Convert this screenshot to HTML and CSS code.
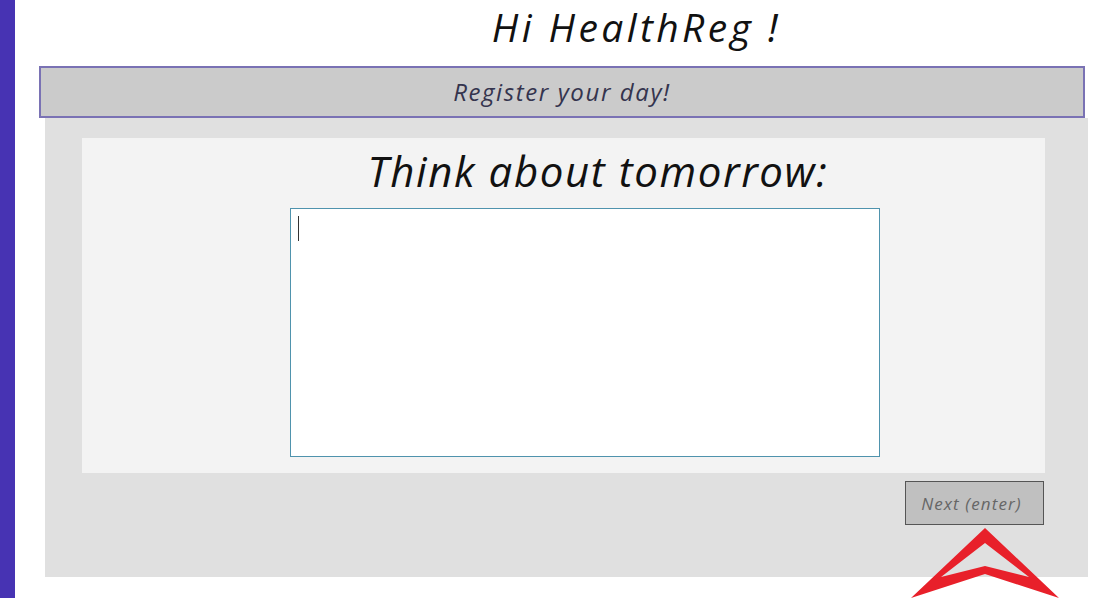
FILE: index.html
```html
<!DOCTYPE html>
<html>
<head>
<meta charset="utf-8">
<link rel="stylesheet" href="styles.css">
</head>
<body>
<div class="sidebar"></div>
<div class="main">
  <h1 class="title">Hi HealthReg !</h1>
  <div class="regbar">Register your day!</div>
  <div class="panel">
    <div class="card">
      <h2 class="question">Think about tomorrow:</h2>
      <div class="answer"><span class="caret"></span></div>
    </div>
    <div class="actions">
      <button class="next">Next (enter)</button>
    </div>
  </div>
</div>
<svg class="pointer" width="170" height="78" viewBox="900 520 170 78">
  <path fill="#e8202a" fill-rule="evenodd" d="M985 528 L1059 598 L985 574 L911 598 Z M985 543 L1029 577 L985 566 L941 577 Z"/>
</svg>
</body>
</html>
```
FILE: styles.css
```css
html, body {
  margin: 0;
  padding: 0;
  background: #ffffff;
}
body {
  display: flex;
  width: 1111px;
  height: 598px;
  overflow: hidden;
  font-family: "Open Sans", "DejaVu Sans", sans-serif;
  font-style: italic;
}
.sidebar {
  width: 15px;
  flex: none;
  background: #4733b3;
}
.main {
  flex: 1;
  display: flex;
  flex-direction: column;
}
.title {
  margin: 0;
  height: 66px;
  box-sizing: border-box;
  padding: 2px 0 0 147px;
  text-align: center;
  font-size: 39px;
  font-weight: 400;
  letter-spacing: 3.4px;
  line-height: 50px;
  color: #111111;
}
.regbar {
  margin-left: 24px;
  width: 1046px;
  height: 52px;
  box-sizing: border-box;
  border: 2px solid #7a72b4;
  background: #cbcbcb;
  text-align: center;
  font-size: 24px;
  letter-spacing: 1.6px;
  line-height: 48px;
  color: #34344e;
}
.panel {
  margin-left: 30px;
  width: 1043px;
  height: 459px;
  background: #e0e0e0;
  display: flex;
  flex-direction: column;
  padding-top: 20px;
  box-sizing: border-box;
}
.card {
  margin-left: 37px;
  width: 963px;
  height: 335px;
  background: #f3f3f3;
  display: flex;
  flex-direction: column;
}
.question {
  margin: 0;
  height: 70px;
  padding-left: 69px;
  text-align: center;
  font-size: 42px;
  font-weight: 400;
  letter-spacing: 1.6px;
  line-height: 66px;
  color: #111111;
}
.answer {
  margin-left: 208px;
  width: 590px;
  height: 249px;
  box-sizing: border-box;
  border: 1px solid #4f93ad;
  background: #ffffff;
  padding: 7px 0 0 7px;
}
.caret {
  display: block;
  width: 1px;
  height: 25px;
  background: #333333;
}
.actions {
  display: flex;
  justify-content: flex-end;
  margin: 8px 44px 0 0;
}
.next {
  width: 139px;
  height: 44px;
  box-sizing: border-box;
  border: 1px solid #555555;
  background: #c0c0c0;
  font-family: "Open Sans", "DejaVu Sans", sans-serif;
  font-style: italic;
  font-size: 17px;
  letter-spacing: 1.1px;
  color: #666666;
  padding: 0 6px 0 0;
}
.pointer {
  position: absolute;
  left: 900px;
  top: 520px;
}
```
